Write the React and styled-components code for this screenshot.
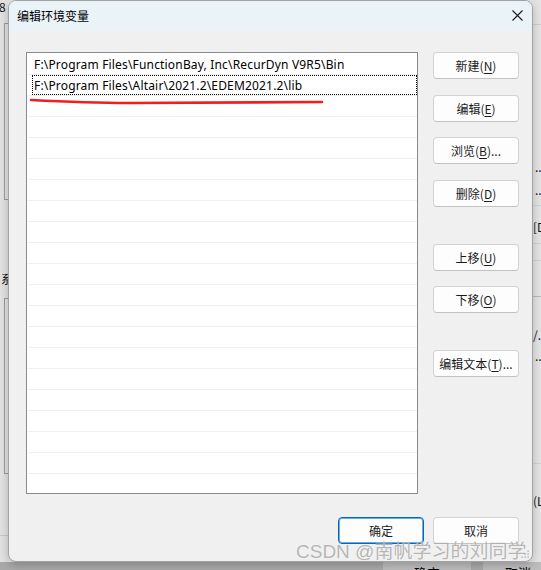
import React from "react";
import styled, { createGlobalStyle } from "styled-components";

const Global = createGlobalStyle`
  html, body { margin: 0; padding: 0; background: #f0f0f0; }
  body { width: 541px; height: 570px; overflow: hidden; font-family: "Noto Sans", "Noto Sans CJK SC", sans-serif; }
`;

const CJK = `"Noto Sans CJK SC", "Noto Sans", sans-serif`;
const LATIN = `"Noto Sans", "Noto Sans CJK SC", sans-serif`;

/* ---------- desktop / background window ---------- */
const Desktop = styled.div`
  position: relative;
  width: 541px;
  height: 570px;
  overflow: hidden;
`;

const BackWindow = styled.div`
  width: 541px;
  height: 570px;
  display: grid;
  grid-template-columns: 8px 1fr 8px;
  grid-template-rows: 562px 8px;
  background: #e6e6e6;
`;

const EdgeColumn = styled.div`
  display: flex;
  flex-direction: column;
  overflow: hidden;
  background: ${(p) => p.$bg};
`;

const Center = styled.div`
  background: #e6e6e6;
`;

const EdgeText = styled.div`
  margin-top: ${(p) => p.$mt}px;
  margin-left: ${(p) => p.$ml || 0}px;
  height: ${(p) => p.$h || 14}px;
  line-height: ${(p) => p.$h || 14}px;
  font-family: ${CJK};
  font-size: 12px;
  color: #111;
  white-space: nowrap;
`;

const EdgeLine = styled.div`
  margin-top: ${(p) => p.$mt}px;
  height: 1px;
  flex: none;
  background: ${(p) => p.$c || "#cfcfcf"};
`;

const GroupBox = styled.div`
  margin-top: ${(p) => p.$mt}px;
  margin-left: 4px;
  height: ${(p) => p.$h}px;
  flex: none;
  box-sizing: border-box;
  border: 1px solid #9c9c9c;
  border-right: none;
`;

const BottomBar = styled.div`
  grid-column: 1 / 4;
  display: flex;
  overflow: hidden;
  background: #a9a9a9;
`;

const BackButton = styled.div`
  margin-left: ${(p) => p.$ml}px;
  width: ${(p) => p.$w}px;
  flex: none;
  height: 20px;
  background: #bdbdbd;
  font-family: ${CJK};
  font-size: 13px;
  line-height: 20px;
  padding-top: 1px;
  text-align: center;
  color: #000;
`;

/* ---------- dialog ---------- */
const Dialog = styled.div`
  position: absolute;
  left: 8px;
  top: 0;
  width: 525px;
  height: 562px;
  box-sizing: border-box;
  border: 1px solid #a3a3a3;
  border-radius: 8px;
  background: #f0f0f0;
  box-shadow: 0 3px 10px rgba(0, 0, 0, 0.22);
  display: flex;
  flex-direction: column;
  overflow: hidden;
`;

const TitleBar = styled.div`
  height: 30px;
  flex: none;
  display: flex;
  align-items: center;
  justify-content: space-between;
  padding: 0 8px;
  background: #eaf3f8;
`;

const Title = styled.div`
  font-family: ${CJK};
  font-size: 12px;
  color: #000;
  margin-top: -1px;
`;

const CloseIcon = styled.svg`
  width: 11px;
  height: 11px;
  margin-right: 1px;
  margin-top: -1px;
`;

const Body = styled.div`
  display: grid;
  grid-template-columns: 1fr 86px;
  column-gap: 15px;
  padding: 21px 13px 0 17px;
`;

const ListBox = styled.div`
  box-sizing: border-box;
  height: 442px;
  padding-top: 1px;
  border: 1px solid #868a92;
  background: #fff;
  overflow: hidden;
`;

const Row = styled.div`
  height: 20px;
  margin-left: 1px;
  padding-left: 4px;
  border-bottom: 1px solid #efefef;
  display: flex;
`;

const Cell = styled.div`
  flex: 1;
  box-sizing: border-box;
  border: 1px dotted ${(p) => (p.$focused ? "#000" : "transparent")};
  padding-left: 1px;
  font-family: ${LATIN};
  font-size: 12px;
  letter-spacing: 0.17px;
  line-height: 19px;
  color: #000;
  white-space: nowrap;
  overflow: hidden;
`;

const ButtonColumn = styled.div`
  display: flex;
  flex-direction: column;
`;

const Button = styled.button`
  box-sizing: border-box;
  width: 86px;
  height: 27px;
  margin-top: ${(p) => p.$mt || 0}px;
  padding: 0;
  flex: none;
  background: #fdfdfd;
  border: 1px solid ${(p) => (p.$primary ? "#0067c0" : "#d3d3d3")};
  border-bottom-color: ${(p) => (p.$primary ? "#0067c0" : "#c2c2c2")};
  border-radius: 4px;
  box-shadow: ${(p) => (p.$primary ? "inset 0 0 0 1px rgba(0,103,192,0.55)" : "none")};
  font-family: ${CJK};
  font-size: 12px;
  color: #1b1b1b;
  line-height: 26px;
  text-align: center;
`;

const Key = styled.span`
  text-decoration: underline;
  text-underline-offset: 2px;
`;

const Footer = styled.div`
  display: flex;
  justify-content: flex-end;
  gap: 9px;
  padding: 23px 13px 0 0;
`;

const Grip = styled.svg`
  position: absolute;
  right: 2px;
  bottom: 2px;
  width: 10px;
  height: 10px;
`;

const Annotation = styled.svg`
  position: absolute;
  left: 0;
  top: 0;
  width: 541px;
  height: 570px;
  pointer-events: none;
`;

const Watermark = styled.div`
  position: absolute;
  left: 296px;
  top: 539px;
  font-family: "Liberation Sans", "Noto Sans CJK SC", sans-serif;
  font-size: 19px;
  line-height: 25px;
  color: rgba(120, 120, 120, 0.55);
  text-shadow: 0 0 1px rgba(255, 255, 255, 0.9);
  white-space: nowrap;
  pointer-events: none;
`;

const paths = [
  "F:\\Program Files\\FunctionBay, Inc\\RecurDyn V9R5\\Bin",
  "F:\\Program Files\\Altair\\2021.2\\EDEM2021.2\\lib",
];

const buttons = [
  { label: "新建", key: "N", mt: 0 },
  { label: "编辑", key: "E", mt: 16 },
  { label: "浏览", key: "B", mt: 15, dots: true },
  { label: "删除", key: "D", mt: 16 },
  { label: "上移", key: "U", mt: 37 },
  { label: "下移", key: "O", mt: 15 },
  { label: "编辑文本", key: "T", mt: 37, dots: true },
];

function BtnLabel({ label, k, dots }) {
  return (
    <>
      {label}(<Key>{k}</Key>){dots ? "..." : ""}
    </>
  );
}

export default function App() {
  const rows = Array.from({ length: 21 }, (_, i) => paths[i] || "");
  return (
    <>
      <Global />
      <Desktop>
        <BackWindow>
          <EdgeColumn $bg="#e2e2e2">
            <EdgeText $mt={0} $ml={-1} $h={13}>8</EdgeText>
            <GroupBox $mt={10} $h={177} />
            <EdgeText $mt={71} $ml={1} $h={16}>系</EdgeText>
            <GroupBox $mt={11} $h={176} />
            <EdgeLine $mt={61} $c="#c9c9c9" />
          </EdgeColumn>
          <Center />
          <EdgeColumn $bg="#e4e4e4">
            <EdgeLine $mt={24} />
            <EdgeText $mt={135} $ml={2}>...</EdgeText>
            <EdgeText $mt={9} $ml={2}>...</EdgeText>
            <EdgeLine $mt={8} $c="#d2d2d2" />
            <EdgeText $mt={14} $ml={0}>[D</EdgeText>
            <EdgeLine $mt={9} $c="#d2d2d2" />
            <EdgeLine $mt={16} $c="#d2d2d2" />
            <EdgeLine $mt={35} $c="#b9b9b9" />
            <EdgeText $mt={31} $ml={0}>/.</EdgeText>
            <EdgeText $mt={7} $ml={2}>...</EdgeText>
            <EdgeLine $mt={100} $c="#d2d2d2" />
            <EdgeText $mt={30} $ml={0}>(L</EdgeText>
          </EdgeColumn>
          <BottomBar>
            <BackButton $ml={383} $w={88}>确定</BackButton>
            <BackButton $ml={12} $w={70}>取消</BackButton>
          </BottomBar>
        </BackWindow>

        <Dialog>
          <TitleBar>
            <Title>编辑环境变量</Title>
            <CloseIcon viewBox="0 0 11 11">
              <path d="M0.5 0.5 L10.5 10.5 M10.5 0.5 L0.5 10.5" stroke="#1a1a1a" strokeWidth="1.1" fill="none" />
            </CloseIcon>
          </TitleBar>
          <Body>
            <ListBox>
              {rows.map((t, i) => (
                <Row key={i}>
                  <Cell $focused={i === 1}>{t}</Cell>
                </Row>
              ))}
            </ListBox>
            <ButtonColumn>
              {buttons.map((b) => (
                <Button key={b.label} $mt={b.mt}>
                  <BtnLabel label={b.label} k={b.key} dots={b.dots} />
                </Button>
              ))}
            </ButtonColumn>
          </Body>
          <Footer>
            <Button $primary>确定</Button>
            <Button>取消</Button>
          </Footer>
          <Grip viewBox="0 0 10 10">
            {[
              [8, 2], [8, 5], [5, 5], [8, 8], [5, 8], [2, 8],
            ].map(([x, y]) => (
              <rect key={`${x}-${y}`} x={x - 0.5} y={y - 0.5} width="1.2" height="1.2" fill="#9a9a9a" />
            ))}
          </Grip>
        </Dialog>

        <Annotation viewBox="0 0 541 570">
          <path
            d="M31 100 C 50 101, 90 103, 130 103 L 322 102"
            stroke="#f41c1c"
            strokeWidth="2.6"
            strokeLinecap="round"
            fill="none"
          />
        </Annotation>
        <Watermark>CSDN @南帆学习的刘同学</Watermark>
      </Desktop>
    </>
  );
}
